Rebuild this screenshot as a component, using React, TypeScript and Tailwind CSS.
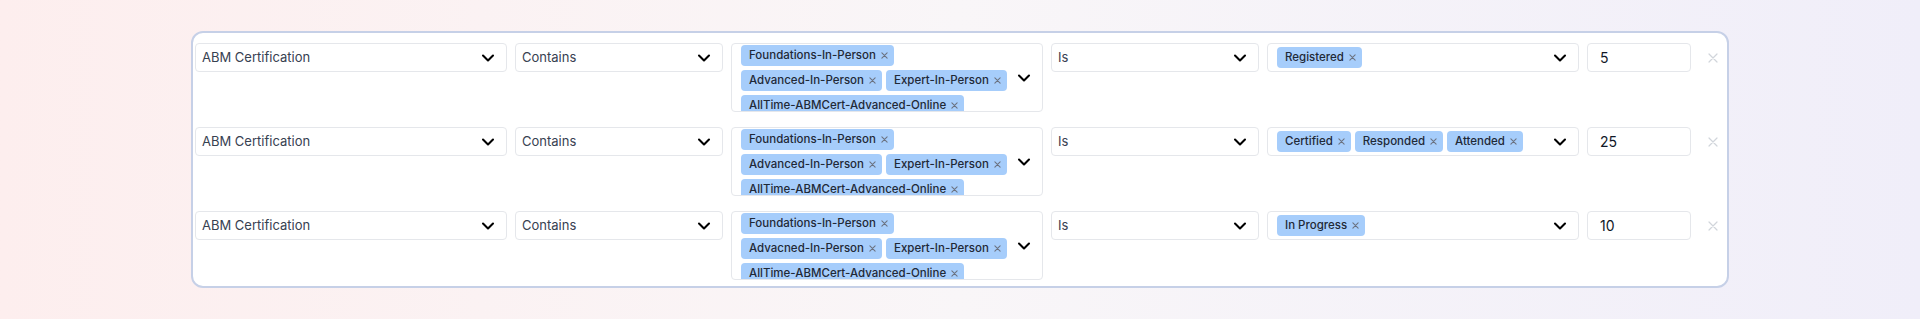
import React from "react";
import { ChevronDown } from "lucide-react";

interface FilterRow {
  id: number
  field: string
  operator: string
  values: string[]
  condition: string
  statuses: string[]
  count: string
}

const rows: FilterRow[] = [
  {
    id: 1,
    field: "ABM Certification",
    operator: "Contains",
    values: ["Foundations-In-Person", "Advanced-In-Person", "Expert-In-Person", "AllTime-ABMCert-Advanced-Online"],
    condition: "Is",
    statuses: ["Registered"],
    count: "5",
  },
  {
    id: 2,
    field: "ABM Certification",
    operator: "Contains",
    values: ["Foundations-In-Person", "Advanced-In-Person", "Expert-In-Person", "AllTime-ABMCert-Advanced-Online"],
    condition: "Is",
    statuses: ["Certified", "Responded", "Attended"],
    count: "25",
  },
  {
    id: 3,
    field: "ABM Certification",
    operator: "Contains",
    values: ["Foundations-In-Person", "Advacned-In-Person", "Expert-In-Person", "AllTime-ABMCert-Advanced-Online"],
    condition: "Is",
    statuses: ["In Progress"],
    count: "10",
  },
]

function TagX() {
  return (
    <svg className="ml-[5px] shrink-0" width="7" height="7" viewBox="0 0 8 8" fill="none">
      <path d="M1 1l6 6M7 1L1 7" stroke="#6b7280" strokeWidth="1.2" strokeLinecap="round" />
    </svg>
  )
}

function Tag({ label }: { label: string }) {
  return (
    <span className="inline-flex h-[21px] items-center whitespace-nowrap rounded bg-[#a6cdfb] pl-2 pr-[6px] text-[11.5px] font-medium text-[#1f2937]">
      {label}
      <TagX />
    </span>
  )
}

function Select({ value, width }: { value: string; width: string }) {
  return (
    <div className={`${width} flex h-[29px] shrink-0 items-center justify-between rounded border border-[#e5e7eb] bg-white pl-1.5 pr-2`}>
      <span className="text-[13px] text-[#374151]">{value}</span>
      <ChevronDown size={20} strokeWidth={2.5} className="text-black" />
    </div>
  )
}

function MultiSelect({ values, tall }: { values: string[]; tall?: boolean }) {
  return (
    <div
      className={`flex w-[312px] shrink-0 rounded border border-[#e5e7eb] bg-white pl-[9px] ${
        tall ? "h-[69px] items-stretch" : "h-[29px] items-center"
      }`}
    >
      <div
        className={`flex min-w-0 flex-1 flex-wrap content-start gap-1 overflow-hidden ${
          tall ? "pt-[1px]" : ""
        }`}
      >
        {values.map((v) => (
          <Tag key={v} label={v} />
        ))}
      </div>
      <div className="ml-1 mr-2 flex items-center">
        <ChevronDown size={20} strokeWidth={2.5} className="text-black" />
      </div>
    </div>
  )
}

export default function App() {
  return (
    <div className="flex h-[319px] w-full items-center justify-center bg-linear-to-r from-[#fdeeee] via-[#f9f6f8] to-[#f0eef9] font-['Inter','Liberation_Sans',sans-serif]">
      <div className="flex w-[1538px] flex-col gap-[15px] rounded-xl border-2 border-[#c6d0e7] bg-white pb-[6px] pl-[2px] pt-[10px]">
        {rows.map((row) => (
          <div key={row.id} className="flex h-[69px] items-start gap-2">
            <Select value={row.field} width="w-[312px]" />
            <Select value={row.operator} width="w-[208px]" />
            <MultiSelect values={row.values} tall />
            <Select value={row.condition} width="w-[208px]" />
            <MultiSelect values={row.statuses} />
            <div className="flex h-[29px] w-[104px] shrink-0 items-center rounded border border-[#e5e7eb] bg-white px-3">
              <span className="text-sm text-[#111827]">{row.count}</span>
            </div>
            <div className="ml-[9px] flex h-[29px] items-center">
              <svg width="10" height="10" viewBox="0 0 10 10" fill="none">
                <path d="M1 1l8 8M9 1L1 9" stroke="#d1d5db" strokeWidth="1.2" strokeLinecap="round" />
              </svg>
            </div>
          </div>
        ))}
      </div>
    </div>
  )
}
